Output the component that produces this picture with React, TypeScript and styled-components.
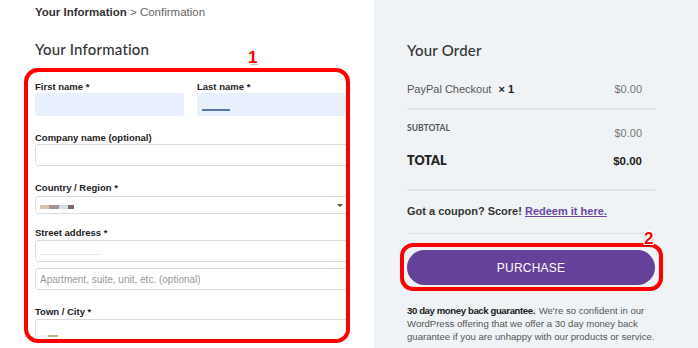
import styled, { createGlobalStyle } from "styled-components"

const GlobalStyle = createGlobalStyle`
  html, body {
    margin: 0;
    padding: 0;
    height: 348px;
    overflow: hidden;
    background: #ffffff;
    font-family: "Liberation Sans", Arial, sans-serif;
    color: #333;
  }
`

const Page = styled.div`
  position: relative;
  display: grid;
  grid-template-columns: 374px 1fr;
  height: 348px;
`

const Left = styled.div`
  padding: 5px 0 0 35px;
  background: #fff;
`

const Right = styled.div`
  background: #f0f3f5;
  padding: 41px 43px 0 33px;
`

const Crumbs = styled.div`
  font-size: 11.5px;
  line-height: 14px;
  color: #666;
  b {
    color: #333;
  }
`

const Heading = styled.h2<{ $mt?: number }>`
  margin: ${(p) => p.$mt ?? 0}px 0 0;
  font-family: "Lato", sans-serif;
  font-weight: 500;
  font-size: 15px;
  line-height: 18px;
  color: #333;
  letter-spacing: 0.2px;
`

const FormBox = styled.div`
  position: relative;
  margin: 10px 0 0 -11px;
  width: 326px;
  height: 275px;
  box-sizing: border-box;
  border: 4px solid #ff0000;
  border-radius: 14px;
  padding: 9px 0 0 7px;
  overflow: hidden;
`

const Badge = styled.span<{ $top: number; $left: number }>`
  position: absolute;
  top: ${(p) => p.$top}px;
  left: ${(p) => p.$left}px;
  font-family: "Liberation Sans", Arial, sans-serif;
  font-weight: 700;
  font-size: 17px;
  line-height: 17px;
  color: #ff0000;
  text-shadow: -1px -1px 0 #fff, 1px -1px 0 #fff, -1px 1px 0 #fff, 1px 1px 0 #fff, 1px 2px 1px rgba(0,0,0,0.25);
`

const Row = styled.div`
  display: flex;
  gap: 13px;
`

const Field = styled.div<{ $mt?: number; $grow?: boolean }>`
  display: flex;
  flex-direction: column;
  margin-top: ${(p) => p.$mt ?? 0}px;
  flex: ${(p) => (p.$grow ? 1 : "none")};
`

const Label = styled.label<{ $gap?: number }>`
  font-size: 9.5px;
  font-weight: 700;
  line-height: 12px;
  color: #222;
  margin-bottom: ${(p) => p.$gap ?? 0}px;
`

const Input = styled.div<{ $h: number; $filled?: boolean; $w?: number; $mt?: number }>`
  position: relative;
  box-sizing: border-box;
  height: ${(p) => p.$h}px;
  width: ${(p) => (p.$w ? `${p.$w}px` : "auto")};
  margin-top: ${(p) => p.$mt ?? 0}px;
  margin-right: ${(p) => (p.$w ? 0 : -6)}px;
  background: ${(p) => (p.$filled ? "#e8f0fe" : "#fff")};
  border: 1px solid ${(p) => (p.$filled ? "#e8f0fe" : "#dcdcdc")};
  border-radius: 3px;
  display: flex;
  align-items: center;
  padding: 0 4px;
  font-size: 10px;
  color: #9a9a9a;
`

const Redacted = styled.span<{ $c: string; $w: number; $h: number; $y: number }>`
  display: inline-block;
  width: ${(p) => p.$w}px;
  height: ${(p) => p.$h}px;
  background: ${(p) => p.$c};
  transform: translateY(${(p) => p.$y}px);
`

const Arrow = styled.span`
  position: absolute;
  right: 8px;
  top: 7px;
  width: 0;
  height: 0;
  border-left: 3px solid transparent;
  border-right: 3px solid transparent;
  border-top: 3px solid #555;
`

const OrderLine = styled.div<{ $pt: number; $pb: number; $border?: boolean; $align?: string }>`
  display: flex;
  justify-content: space-between;
  align-items: ${(p) => p.$align ?? "center"};
  padding: ${(p) => p.$pt}px 13px ${(p) => p.$pb}px 0;
  border-bottom: ${(p) => (p.$border ? "2px solid #dfe3e6" : "none")};
`

const Item = styled.span`
  font-size: 11px;
  color: #555;
  b {
    color: #222;
    margin-left: 4px;
  }
`

const Price = styled.span<{ $strong?: boolean; $dy?: number }>`
  font-size: ${(p) => (p.$strong ? "11.5px" : "11px")};
  font-weight: ${(p) => (p.$strong ? 700 : 400)};
  color: ${(p) => (p.$strong ? "#222" : "#777")};
  transform: translateY(${(p) => p.$dy ?? 0}px);
`

const SubLabel = styled.span`
  font-family: "Lato", sans-serif;
  font-size: 8.5px;
  font-weight: 700;
  color: #555;
`

const TotalLabel = styled.span`
  font-family: "Lato", sans-serif;
  font-size: 12.5px;
  font-weight: 800;
  color: #222;
`

const Coupon = styled.div`
  padding: 14px 0 16px;
  border-bottom: 1px solid #dde1e4;
  font-size: 11px;
  font-weight: 700;
  color: #333;
  a {
    color: #6b46a8;
    text-decoration: underline;
  }
`

const ButtonBox = styled.div`
  position: relative;
  margin: 9px -8px 0 -7px;
  border: 4px solid #ff0000;
  border-radius: 13px;
  padding: 3px 4px 2px 3px;
`

const Purchase = styled.button`
  display: block;
  width: 100%;
  height: 35px;
  border: none;
  border-radius: 18px;
  background: #66419a;
  color: #fff;
  font-family: "Liberation Sans", Arial, sans-serif;
  font-size: 12px;
  letter-spacing: 0.2px;
`

const Guarantee = styled.p`
  margin: 13px 0 0;
  font-size: 9.6px;
  line-height: 13px;
  color: #555;
  b {
    color: #222;
    letter-spacing: -0.4px;
    margin-right: 1px;
  }
`

const OneWrap = styled.div`
  position: absolute;
  top: 49px;
  left: 248px;
`

export default function App() {
  return (
    <>
      <GlobalStyle />
      <Page>
        <Left>
          <Crumbs>
            <b>Your Information</b> &gt; Confirmation
          </Crumbs>
          <Heading $mt={21}>Your Information</Heading>
          <FormBox>
            <Row>
              <Field>
                <Label>First name *</Label>
                <Input $h={23} $w={149} $filled />
              </Field>
              <Field $grow>
                <Label>Last name *</Label>
                <Input $h={23} $filled>
                  <Redacted $c="#5876a8" $w={28} $h={2} $y={5} />
                </Input>
              </Field>
            </Row>
            <Field $mt={16}>
              <Label>Company name (optional)</Label>
              <Input $h={22} />
            </Field>
            <Field $mt={16}>
              <Label $gap={2}>Country / Region *</Label>
              <Input $h={18}>
                <Redacted $c="#d9c2a8" $w={9} $h={4} $y={2} />
                <Redacted $c="#a89094" $w={10} $h={4} $y={2} />
                <Redacted $c="#d2dde6" $w={9} $h={4} $y={2} />
                <Redacted $c="#7a6a64" $w={6} $h={4} $y={2} />
                <Arrow />
              </Input>
            </Field>
            <Field $mt={13}>
              <Label $gap={1}>Street address *</Label>
              <Input $h={22}>
                <Redacted $c="#e6e3ef" $w={60} $h={1} $y={3} />
              </Input>
              <Input $h={22} $mt={6}>
                Apartment, suite, unit, etc. (optional)
              </Input>
            </Field>
            <Field $mt={16}>
              <Label $gap={1}>Town / City *</Label>
              <Input $h={26}>
                <Redacted $c="#eef2f6" $w={8} $h={2} $y={4} />
                <Redacted $c="#c4b08a" $w={10} $h={2} $y={4} />
              </Input>
            </Field>
          </FormBox>
        </Left>
        <Right>
          <Heading>Your Order</Heading>
          <OrderLine $pt={24} $pb={13} $border>
            <Item>
              PayPal Checkout <b>× 1</b>
            </Item>
            <Price>$0.00</Price>
          </OrderLine>
          <OrderLine $pt={13} $pb={0} $align="flex-start">
            <SubLabel>SUBTOTAL</SubLabel>
            <Price $dy={4}>$0.00</Price>
          </OrderLine>
          <OrderLine $pt={18} $pb={21} $border>
            <TotalLabel>TOTAL</TotalLabel>
            <Price $strong>$0.00</Price>
          </OrderLine>
          <Coupon>
            Got a coupon? Score! <a href="#">Redeem it here.</a>
          </Coupon>
          <ButtonBox>
            <Badge $top={-17} $left={240}>2</Badge>
            <Purchase>PURCHASE</Purchase>
          </ButtonBox>
          <Guarantee>
            <b>30 day money back guarantee.</b> We're so confident in our WordPress offering that we
            offer a 30 day money back guarantee if you are unhappy with our products or service.
          </Guarantee>
        </Right>
        <OneWrap>
          <Badge $top={0} $left={0}>1</Badge>
        </OneWrap>
      </Page>
    </>
  )
}
